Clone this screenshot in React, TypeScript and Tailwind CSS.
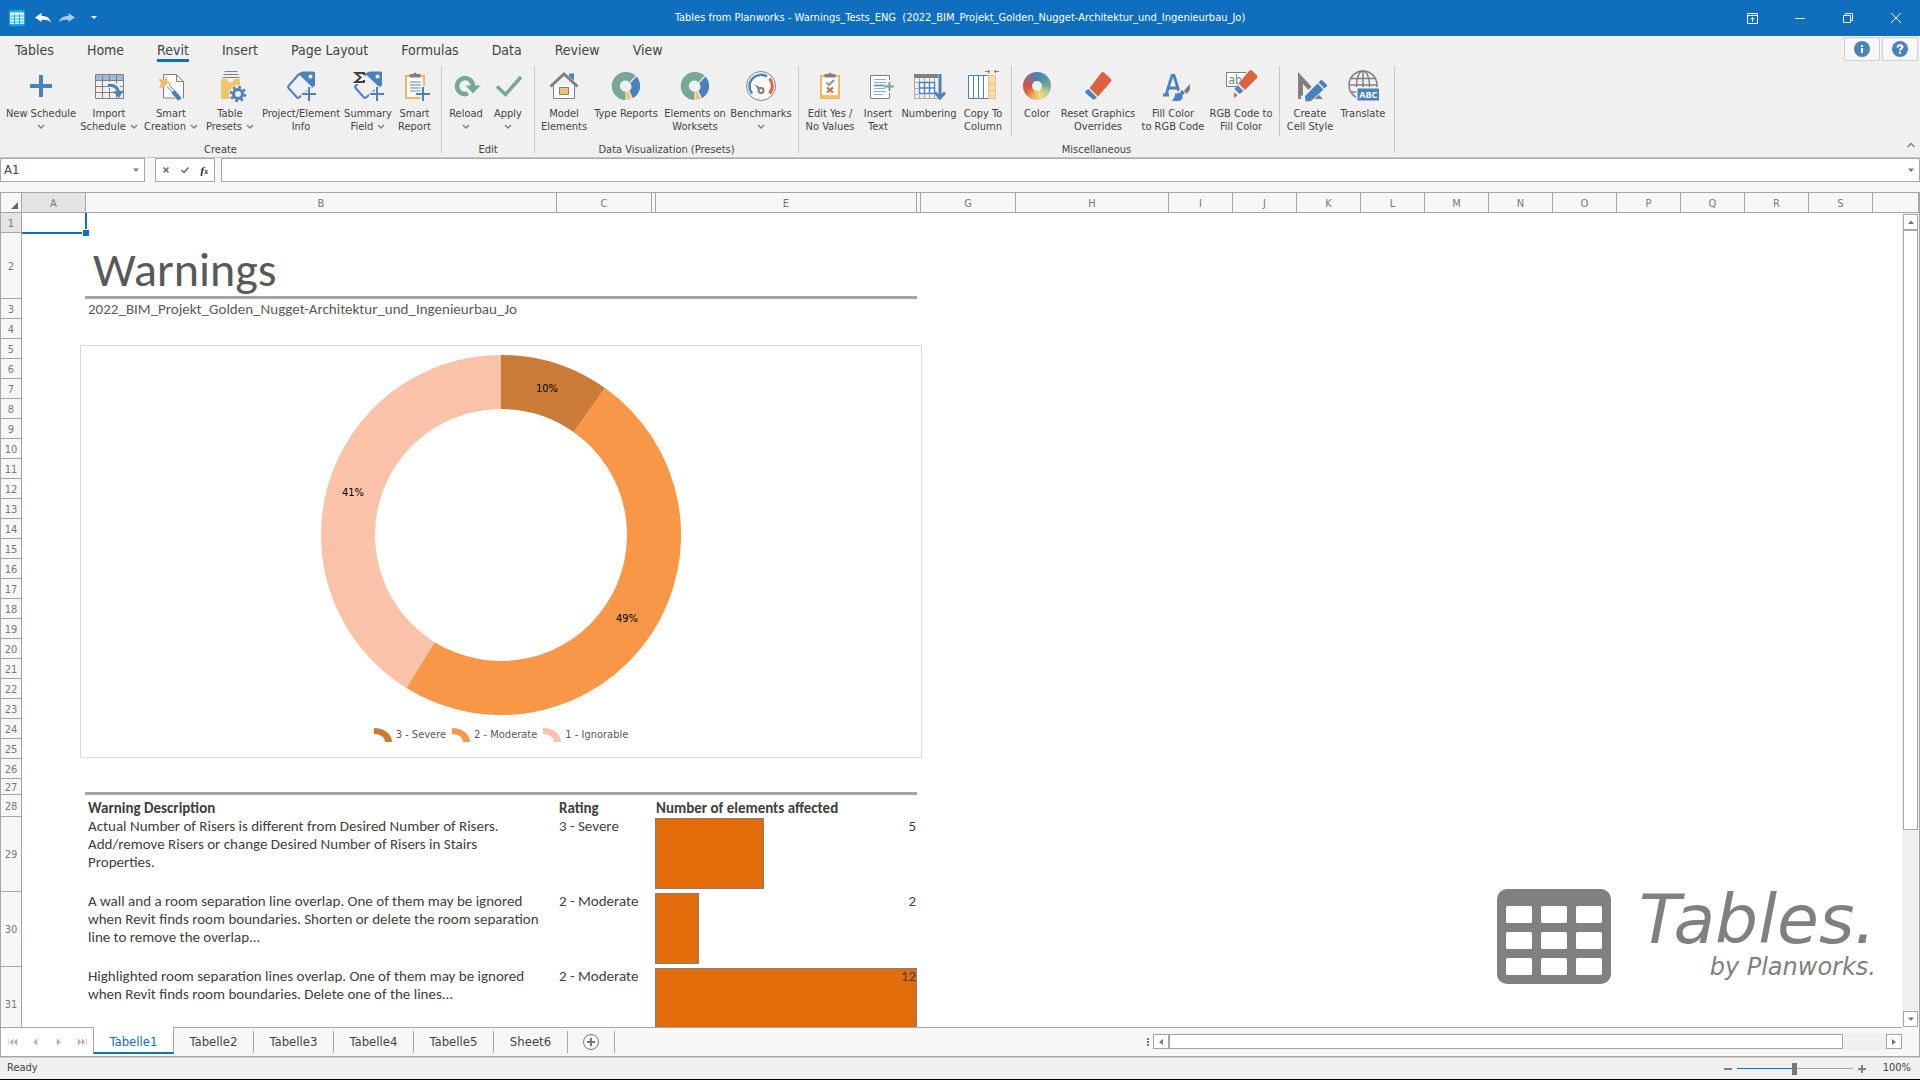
import { useState } from "react";
import type { ReactNode } from "react";

const BLUE = "#4b82bb";
const GREEN = "#77a897";
const ORANGE = "#f0c36d";
const RED = "#dc6342";
const GRAY = "#808080";
const BG = "#f0f0f0";

/* --------------------------------------------------------- */
/* RIBBON ICONS (32 x 32) */
/* --------------------------------------------------------- */
function Icon({ children }: { children: ReactNode }) {
  return (
    <svg viewBox="0 0 32 32" className="h-8 w-8 overflow-visible" fill="none" aria-hidden="true">
      {children}
    </svg>
  );
}

function SmallPlus({ x, y, color = BLUE }: { x: number; y: number; color?: string }) {
  return (
    <>
      <path d={`M${x - 8} ${y}H${x + 8}M${x} ${y - 8}V${y + 8}`} stroke={BG} strokeWidth="5" />
      <path d={`M${x - 7} ${y}H${x + 7}M${x} ${y - 7}V${y + 7}`} stroke={color} strokeWidth="2" />
    </>
  );
}

function Tag() {
  return (
    <>
      <path d="M14 4L3.500 16a1.500 1.500 0 0 0 0 2L12 27.500a1.500 1.500 0 0 0 2 0L29 15V3.500a1 1 0 0 0-1-1H18z" stroke={BLUE} strokeWidth="2" />
      <path d="M14 4.500L17 2h12a1 1 0 0 1 1 1v11l-3 3z" fill={BLUE} />
      <circle cx="25.500" cy="6.500" r="2" fill={BG} />
    </>
  );
}

const NewIcon = () => (
  <Icon>
    <path d="M16 5v22M5 16h22" stroke={BLUE} strokeWidth="4" />
  </Icon>
);

const ImportIcon = () => (
  <Icon>
    <rect x="3" y="5" width="28" height="5" fill="#9fb9d8" />
    <path d="M2.500 4.500h28v24h-28zM2.500 10.500h28M2.500 16.500h28M2.500 22.500h28M9.500 4.500v24M16.500 4.500v24M23.500 4.500v24" stroke={GRAY} />
    <path d="M15 15c7-1 11 3 11 9" stroke={BG} strokeWidth="6" />
    <path d="M15 15.500c7-1 10.500 3 10.500 8" stroke={BLUE} strokeWidth="3" />
    <path d="M20 21.500L26 28l4.500-7.500z" fill={BLUE} />
  </Icon>
);

const WandIcon = () => (
  <Icon>
    <path d="M8.500 4.500h13l7 7v16.500h-20zM21.500 4.500v7h7" stroke={GRAY} fill="#fbfbfb" />
    <path d="M3.500 8.500l5 1.500 3.500-3.500.5 5 4.500 2-4.500 2-.5 5-3.500-3.500-5 1.500 2.500-4.500z" fill="#f2bc68" />
    <path d="M11 15l15 15" stroke="#fbfbfb" strokeWidth="6" />
    <path d="M12 16.500l8 8" stroke={BLUE} strokeWidth="1" />
    <path d="M14 15l7 7" stroke={BLUE} strokeWidth="1" />
    <path d="M18 21.500l7 8" stroke={BLUE} strokeWidth="4.500" />
  </Icon>
);

const PresetsIcon = () => (
  <Icon>
    <path d="M10.500 1.500h13M9.500 4.500h15M8.500 7.500h17" stroke={GRAY} />
    <path d="M7 9h19v20H7z" fill={ORANGE} />
    <path d="M13 9h7a3.500 3.500 0 0 1-7 0z" fill={BG} />
    <circle cx="24" cy="24" r="9" fill={BG} />
    <circle cx="24" cy="24" r="4.500" stroke={BLUE} strokeWidth="3" />
    <circle cx="24" cy="24" r="7" stroke={BLUE} strokeWidth="2.500" strokeDasharray="2.750 2.750" />
  </Icon>
);

const ProjectIcon = () => (
  <Icon>
    <Tag />
    <SmallPlus x={24} y={24} />
  </Icon>
);

const SummaryIcon = () => (
  <Icon>
    <Tag />
    <path d="M1 1h12v13H1z" fill={BG} />
    <path d="M12 5V3H3.500l5 4.500-5 4.500H12v-2" stroke="#404040" strokeWidth="2" />
    <SmallPlus x={25} y={24} />
  </Icon>
);

function Clipboard({ children }: { children: ReactNode }) {
  return (
    <Icon>
      <path d="M7 6h18v22H7z" fill="#fff" stroke="#efb95b" strokeWidth="2" />
      <path d="M10.500 7.500V4h4a1.500 1.500 0 0 1 3 0h4v3.500z" fill={GRAY} />
      {children}
    </Icon>
  );
}

const ReportIcon = () => (
  <Clipboard>
    <path d="M11 12h11M11 15h11M11 18h11M11 21h11" stroke={BLUE} />
    <SmallPlus x={24} y={24} />
  </Clipboard>
);

const ReloadIcon = () => (
  <Icon>
    <path d="M23 16a8 8 0 1 0-5 7.500" stroke={GREEN} strokeWidth="4.500" />
    <path d="M15.500 15.500h15L23 23.500z" fill={GREEN} />
  </Icon>
);

const ApplyIcon = () => (
  <Icon>
    <path d="M5 16.500l8.500 8L29 7" stroke={GREEN} strokeWidth="3.500" />
  </Icon>
);

const HouseIcon = () => (
  <Icon>
    <path d="M21 3.500h5v7l-5-4z" fill={BLUE} />
    <path d="M5.500 15v13.500h21V15" stroke={GRAY} fill="#fbfbfb" />
    <path d="M2.500 16.500L16 4l13.500 12.500" stroke={GRAY} strokeWidth="3" />
    <path d="M11.500 17.500h9v7h-9z" fill={ORANGE} stroke={GRAY} />
  </Icon>
);

const RingIcon = () => (
  <Icon>
    <path d="M16 2a14 14 0 0 1 9.500 3.600l-6 6.800A5.500 5.500 0 1 0 15.500 21.500V30A14 14 0 0 1 16 2z" fill={GREEN} />
    <path d="M26.500 6.500a14 14 0 0 1-3.500 21.700l-3.500-7.200a5.500 5.500 0 0 0 .8-7.800z" fill={BLUE} />
    <path d="M21.700 28.800A14 14 0 0 1 16.500 30v-8.500l1.600-.3z" fill={ORANGE} />
  </Icon>
);

const GaugeIcon = () => (
  <Icon>
    <circle cx="16" cy="16" r="14.500" stroke={GRAY} fill="#f8f8f8" />
    <path d="M7 23.500a11.500 11.500 0 0 1 15-17" stroke={BLUE} strokeWidth="2.500" />
    <path d="M24.500 8.500a11.500 11.500 0 0 1 0 15" stroke={RED} strokeWidth="3" />
    <path d="M9.500 14l8 5-3 3z" fill={GRAY} />
    <circle cx="16" cy="20.500" r="2.500" stroke={GRAY} strokeWidth="2" fill="#f8f8f8" />
  </Icon>
);

const YesNoIcon = () => (
  <Clipboard>
    <path d="M8 25h16v3H8z" fill={ORANGE} />
    <path d="M12.500 12.500l2.500 2.500 5-5" stroke={GREEN} strokeWidth="2.200" />
    <path d="M13 17.500l6 5M19 17.500l-6 5" stroke={RED} strokeWidth="2.200" />
  </Clipboard>
);

const InsertTextIcon = () => (
  <Icon>
    <path d="M8.500 5.500h19v23h-19z" stroke={GRAY} fill="#fff" />
    <path d="M12 9.500h12M12 12.500h12M12 18.500h12M12 21.500h12M12 24.500h9" stroke="#8dacd0" />
    <path d="M12 15.500h12" stroke={GREEN} strokeWidth="2" />
    <path d="M28 10v13M22 16.500h11" stroke={BG} strokeWidth="4" />
    <path d="M27.500 12v9M22 16.500h10" stroke={GREEN} strokeWidth="2" />
  </Icon>
);

const NumberingIcon = () => (
  <Icon>
    <path d="M1 4h24v4H1z" fill={GRAY} />
    <path d="M1.500 8v20.500H25M6.500 8v4M11.500 8v4M16.500 8v4M21.500 8v4M1.500 12.500h4M1.500 18.500h4M1.500 24.500h4M6.500 25v4M11.500 25v4M16.500 25v4M21.500 25v4" stroke="#a8a8a8" />
    <path d="M6.500 12.500h15v11h-15zM6.500 18h15M11.500 12.500v11M16.500 12.500v11" stroke={BLUE} strokeWidth="1.500" fill="#fff" />
    <path d="M27 4v23M22 22.500l5 5.500 5-5.500" stroke={BLUE} strokeWidth="3" />
  </Icon>
);

const CopyColumnIcon = () => (
  <Icon>
    <path d="M1.500 5.500h20v23h-20zM6.500 5.500v23M11.500 5.500v23M16.500 5.500v23" stroke={BLUE} fill="#fff" />
    <path d="M21.500 5.500h7v23h-7zM21.500 13.500h7M21.500 20.500h7" stroke={ORANGE} fill="#f1dcb8" />
    <path d="M18 1.500h5M21 0l2 1.500L21 3M32 1.500h-5M29 0l-2 1.500L29 3" stroke={GRAY} />
  </Icon>
);

const ColorIcon = () => (
  <span className="flex h-8 w-8 items-center justify-center">
    <span className="flex h-7 w-7 items-center justify-center rounded-full bg-[conic-gradient(#4b82bb,#5b9aa0_15%,#77a897_25%,#b9cb8f_33%,#f3d98a_45%,#f2b160_55%,#dc6342_68%,#c9544a_76%,#8f6a80_88%,#4b82bb)]">
      <span className="h-2.5 w-2.5 rounded-full bg-[#f0f0f0]" />
    </span>
  </span>
);

const EraserIcon = () => (
  <Icon>
    <path d="M19.500 2.500a2 2 0 0 1 2.500 0l7 6.500a2 2 0 0 1 0 2.500L16 26.500 7.500 18z" fill={RED} />
    <path d="M6.500 19l8.500 8.500-2 1.500a2 2 0 0 1-2.500 0L3.500 23a2 2 0 0 1 0-2z" fill={BLUE} />
  </Icon>
);

const FillColorIcon = () => (
  <Icon>
    <path d="M6 25h6M18 25h5M9 25L15 5.500h2L23 25M12 18h8" stroke={BLUE} strokeWidth="2.800" />
    <path d="M22 26L34 14" stroke={BG} strokeWidth="8" />
    <path d="M14 30.500c4 0 3-8 8-7.500 5 .500 5 8-1 8-3 0-5 0-7-.500z" fill={BLUE} />
    <path d="M24 24l2.500-2.500" stroke={BLUE} strokeWidth="4" />
    <path d="M27 20.500l6-6.500v6l-3.500 4z" fill={GRAY} />
  </Icon>
);

const RgbIcon = () => (
  <Icon>
    <path d="M1.500 2.500h20v14h-20z" stroke={GRAY} fill="#fbfbfb" />
    <text x="3.500" y="13.500" fontSize="12" fill={GRAY} fontFamily="DejaVu Sans Condensed">ab</text>
    <path d="M13 24L27 5" stroke={BG} strokeWidth="12" />
    <path d="M24.500.600a2 2 0 0 1 2.500 0l5 5a2 2 0 0 1 0 2.500L20 20l-6.500-6.500z" fill={RED} />
    <path d="M12.500 15l6 6-4 3-5-5z" fill={BLUE} />
    <path d="M9 22l3.500 3.500L9 28z" fill={RED} />
  </Icon>
);

const StyleIcon = () => (
  <Icon>
    <path d="M4 2l25 27H4zM9 14v10h9z" fill={GRAY} fillRule="evenodd" />
    <path d="M10 31L33 10" stroke={BG} strokeWidth="11" />
    <path d="M27.500 9.500l6 6-3 3-6-6zM23.500 13.500l6 6L17 31l-5.500.500L11 26z" fill={BLUE} />
  </Icon>
);

const TranslateIcon = () => (
  <Icon>
    <circle cx="16" cy="15" r="14" stroke={GRAY} strokeWidth="1.500" />
    <ellipse cx="16" cy="15" rx="6.500" ry="14" stroke={GRAY} strokeWidth="1.500" />
    <path d="M16 1v28M2 15h28M4 8.500h24M4 22h24" stroke={GRAY} strokeWidth="1.500" />
    <path d="M9 17h26v15H9z" fill={BG} />
    <path d="M10.500 18.500H32v12H10.500z" fill={BLUE} />
    <text x="21.250" y="28" fontSize="9" fontWeight="bold" textAnchor="middle" fill="#fff" fontFamily="Noto Sans">ABC</text>
  </Icon>
);

/* --------------------------------------------------------- */
/* DATA */
/* --------------------------------------------------------- */
const MENU = ["Tables", "Home", "Revit", "Insert", "Page Layout", "Formulas", "Data", "Review", "View"];

type Command = { label: string[]; icon: () => ReactNode; width: string; arrow?: boolean; dividerAfter?: boolean };

const GROUPS: { name: string; width: string; commands: Command[] }[] = [
  {
    name: "Create",
    width: "w-[442px]",
    commands: [
      { label: ["New Schedule", ""], icon: NewIcon, width: "w-[82px]", arrow: true },
      { label: ["Import", "Schedule"], icon: ImportIcon, width: "w-[54px]", arrow: true },
      { label: ["Smart", "Creation"], icon: WandIcon, width: "w-[70px]", arrow: true },
      { label: ["Table", "Presets"], icon: PresetsIcon, width: "w-[48px]", arrow: true },
      { label: ["Project/Element", "Info"], icon: ProjectIcon, width: "w-[94px]" },
      { label: ["Summary", "Field"], icon: SummaryIcon, width: "w-[40px]", arrow: true },
      { label: ["Smart", "Report"], icon: ReportIcon, width: "w-[53px]" },
    ],
  },
  {
    name: "Edit",
    width: "w-[93px]",
    commands: [
      { label: ["Reload", ""], icon: ReloadIcon, width: "w-[48px]", arrow: true },
      { label: ["Apply", ""], icon: ApplyIcon, width: "w-[36px]", arrow: true },
    ],
  },
  {
    name: "Data Visualization (Presets)",
    width: "w-[264px]",
    commands: [
      { label: ["Model", "Elements"], icon: HouseIcon, width: "w-[58px]" },
      { label: ["Type Reports"], icon: RingIcon, width: "w-[66px]" },
      { label: ["Elements on", "Worksets"], icon: RingIcon, width: "w-[72px]" },
      { label: ["Benchmarks", ""], icon: GaugeIcon, width: "w-[60px]", arrow: true },
    ],
  },
  {
    name: "Miscellaneous",
    width: "w-[596px]",
    commands: [
      { label: ["Edit Yes /", "No Values"], icon: YesNoIcon, width: "w-[62px]" },
      { label: ["Insert", "Text"], icon: InsertTextIcon, width: "w-[34px]" },
      { label: ["Numbering"], icon: NumberingIcon, width: "w-[68px]" },
      { label: ["Copy To", "Column"], icon: CopyColumnIcon, width: "w-[40px]", dividerAfter: true },
      { label: ["Color"], icon: ColorIcon, width: "w-[48px]" },
      { label: ["Reset Graphics", "Overrides"], icon: EraserIcon, width: "w-[74px]" },
      { label: ["Fill Color", "to RGB Code"], icon: FillColorIcon, width: "w-[76px]" },
      { label: ["RGB Code to", "Fill Color"], icon: RgbIcon, width: "w-[60px]", dividerAfter: true },
      { label: ["Create", "Cell Style"], icon: StyleIcon, width: "w-[58px]" },
      { label: ["Translate"], icon: TranslateIcon, width: "w-[48px]" },
    ],
  },
];

const COLUMNS = [
  { name: "A", width: "w-[64px]" },
  { name: "B", width: "w-[471px]" },
  { name: "C", width: "w-[95px]" },
  { name: "", width: "w-[4px]" },
  { name: "E", width: "w-[261px]" },
  { name: "", width: "w-[4px]" },
  { name: "G", width: "w-[95px]" },
  { name: "H", width: "w-[153px]" },
  ...["I", "J", "K", "L", "M", "N", "O", "P", "Q", "R", "S"].map((name) => ({ name, width: "w-[64px]" })),
];

const SLICES = [
  { name: "3 - Severe", value: 5, color: "#cb7b38", label: "10%", x: 226, y: 37 },
  { name: "2 - Moderate", value: 25, color: "#f89747", label: "49%", x: 306, y: 267 },
  { name: "1 - Ignorable", value: 21, color: "#fac3a9", label: "41%", x: 32, y: 141 },
];

const WARNINGS = [
  {
    row: 29,
    lines: ["Actual Number of Risers is different from Desired Number of Risers.", "Add/remove Risers or change Desired Number of Risers in Stairs", "Properties."],
    rating: "3 - Severe",
    count: 5,
  },
  {
    row: 30,
    lines: ["A wall and a room separation line overlap. One of them may be ignored", "when Revit finds room boundaries. Shorten or delete the room separation", "line to remove the overlap..."],
    rating: "2 - Moderate",
    count: 2,
  },
  {
    row: 31,
    lines: ["Highlighted room separation lines overlap. One of them may be ignored", "when Revit finds room boundaries. Delete one of the lines..."],
    rating: "2 - Moderate",
    count: 12,
  },
];
const MAX_COUNT = 12;

const SHEETS = ["Tabelle1", "Tabelle2", "Tabelle3", "Tabelle4", "Tabelle5", "Sheet6"];

/* --------------------------------------------------------- */
/* PARTS */
/* --------------------------------------------------------- */
function Chevron({ up = false }: { up?: boolean }) {
  return (
    <svg viewBox="0 0 8 6" className="inline-block h-1.5 w-2" fill="none" aria-hidden="true">
      <path d={up ? "M.5 5L4 1.500 7.500 5" : "M1 1l3 3 3-3"} stroke="#808080" strokeWidth="1.500" />
    </svg>
  );
}

function Triangle({ dir }: { dir: "up" | "down" | "left" | "right" }) {
  const paths = { up: "M1 6h6L4 2.500z", down: "M1 2.500h6L4 6z", left: "M6 1v6L2 4z", right: "M2 1v6l4-3z" };
  return (
    <svg viewBox="0 0 8 8" className="h-2 w-2" aria-hidden="true">
      <path d={paths[dir]} fill="#777" />
    </svg>
  );
}

function TitleBar() {
  return (
    <header className="flex h-9 shrink-0 items-center bg-[#106ebe] text-white">
      <div className="flex flex-1 items-center">
        <svg viewBox="0 0 16 16" className="ml-[9px] h-4 w-4" aria-hidden="true">
          <rect width="16" height="16" rx="2" fill="#00b0f0" />
          <path d="M1 2.500h14V14H1z" fill="#fff" />
          <path d="M1 6h14M1 9h14M1 12h14M5.500 4v10M10.500 4v10" stroke="#00b0f0" />
        </svg>
        <button aria-label="Undo" className="ml-2.5">
          <svg viewBox="0 0 16 12" className="h-3 w-4" fill="#fff"><path d="M0 5.500L6.500 1v3C12 4 15 6 16 10.500c-2.500-2.500-5-3-9.500-2.500v2z" /></svg>
        </button>
        <button aria-label="Redo" className="ml-2">
          <svg viewBox="0 0 16 12" className="h-3 w-4" fill="#a9cbea"><path d="M16 5.500L9.500 1v3C4 4 1 6 0 10.500c2.500-2.500 5-3 9.500-2.500v2z" /></svg>
        </button>
        <button aria-label="Customize Quick Access Toolbar" className="ml-4">
          <svg viewBox="0 0 6 4" className="h-1 w-1.5" fill="#fff"><path d="M0 0h6L3 3z" /></svg>
        </button>
      </div>
      <h1 className="text-[11px] whitespace-pre">
        {"Tables from Planworks - Warnings_Tests_ENG  (2022_BIM_Projekt_Golden_Nugget-Architektur_und_Ingenieurbau_Jo)"}
      </h1>
      <div className="flex flex-1 justify-end">
        <button aria-label="Ribbon Display Options" className="flex h-9 w-12 items-center justify-center">
          <svg viewBox="0 0 11 11" className="h-[11px] w-[11px]" fill="none" stroke="#fff"><path d="M.5.5h10v10H.5zM.5 2.500h10M5.500 9V4.500M3.500 6.500l2-2 2 2" /></svg>
        </button>
        <button aria-label="Minimize" className="flex h-9 w-12 items-center justify-center">
          <svg viewBox="0 0 10 10" className="h-2.5 w-2.5" stroke="#fff"><path d="M0 5.500h10" /></svg>
        </button>
        <button aria-label="Restore" className="flex h-9 w-12 items-center justify-center">
          <svg viewBox="0 0 10 10" className="h-2.5 w-2.5" fill="none" stroke="#fff"><path d="M.5 2.500h7v7h-7zM2.500 2.500v-2h7v7h-2" /></svg>
        </button>
        <button aria-label="Close" className="flex h-9 w-12 items-center justify-center">
          <svg viewBox="0 0 10 10" className="h-2.5 w-2.5" stroke="#fff"><path d="M0 0l10 10M10 0L0 10" /></svg>
        </button>
      </div>
    </header>
  );
}

function Ribbon() {
  const [active, setActive] = useState("Revit");
  return (
    <section className="flex h-[122px] shrink-0 flex-col border-b border-[#c8c8c8] bg-[#f0f0f0]">
      <div className="flex justify-between pr-0.5">
        <nav className="flex gap-[33px] pl-[15px]">
          {MENU.map((name) => (
            <button
              key={name}
              onClick={() => setActive(name)}
              className={`h-[26px] border-b-[3px] pt-1 text-sm leading-5 ${active === name ? "border-[#106ebe]" : "border-transparent"}`}
            >
              {name}
            </button>
          ))}
        </nav>
        <div className="flex gap-0.5 pt-px">
          <button aria-label="Info" className="flex h-6 w-9 items-center justify-center rounded-xs border border-[#d0d0d0] bg-[#f7f7f7]">
            <svg viewBox="0 0 16 16" className="h-4 w-4"><circle cx="8" cy="8" r="8" fill={BLUE} /><path d="M7 4h2v2H7zM7 7h2v5H7z" fill="#fff" /></svg>
          </button>
          <button aria-label="Help" className="flex h-6 w-9 items-center justify-center rounded-xs border border-[#d0d0d0] bg-[#f7f7f7]">
            <svg viewBox="0 0 16 16" className="h-4 w-4"><circle cx="8" cy="8" r="8" fill={BLUE} /><path d="M5.500 6.500C5.500 3.500 10.500 3.500 10.500 6c0 1.700-2.500 1.500-2.500 3.500" fill="none" stroke="#fff" strokeWidth="2" /><path d="M7 10.800h2v2H7z" fill="#fff" /></svg>
          </button>
        </div>
      </div>
      <div className="flex flex-1 pt-1">
        {GROUPS.map((group) => (
          <div key={group.name} className={`flex h-[87px] flex-col border-r border-[#c8c8c8] ${group.width}`}>
            <div className="flex h-[77px] shrink-0">
              {group.commands.map(({ label, icon: CommandIcon, width, arrow, dividerAfter }) => (
                <div key={label.join(" ")} className={`flex shrink-0 ${dividerAfter ? "mr-px" : ""}`}>
                  <button className={`flex shrink-0 flex-col items-center pt-1 text-[11px] leading-[13px] ${width}`}>
                    <CommandIcon />
                    <span className="mt-[5px] whitespace-nowrap">{label[0]}</span>
                    {label.length > 1 && (
                      <span className="flex h-[13px] items-center gap-1 whitespace-nowrap">
                        {label[1]}
                        {arrow && <Chevron />}
                      </span>
                    )}
                  </button>
                  {dividerAfter && <span className="ml-2 h-[70px] w-px bg-[#c8c8c8]" />}
                </div>
              ))}
            </div>
            <div className="text-center text-[11px] leading-[13px]">{group.name}</div>
          </div>
        ))}
        <button aria-label="Collapse the Ribbon" className="mr-[3px] mb-[9px] ml-auto flex w-3 items-end justify-center">
          <Chevron up />
        </button>
      </div>
    </section>
  );
}

function FormulaBar() {
  return (
    <div className="flex h-[34px] shrink-0 items-start bg-[#f7f7f7]">
      <div className="flex h-6 w-[145px] items-center border border-[#a6a6a6] bg-white pr-1">
        <input aria-label="Name box" defaultValue="A1" className="w-full min-w-0 pl-[3px] text-[13px] outline-none" />
        <button aria-label="Open name list"><Triangle dir="down" /></button>
      </div>
      <div className="ml-2.5 flex h-6 w-[60px] items-center justify-around border border-[#a6a6a6] bg-white">
        <button aria-label="Cancel">
          <svg viewBox="0 0 8 8" className="h-2 w-2" stroke="#666" strokeWidth="1.500"><path d="M1.500 1.500l5 5M6.500 1.500l-5 5" /></svg>
        </button>
        <button aria-label="Enter">
          <svg viewBox="0 0 8 8" className="h-2 w-2" fill="none" stroke="#666" strokeWidth="1.500"><path d="M.5 4L3 6.500 7.500 1.500" /></svg>
        </button>
        <button aria-label="Insert function" className="flex items-center font-['Liberation_Serif',serif] text-[11px] leading-3 font-bold text-[#222] italic">
          f<span className="pt-1 text-[8px] leading-2">x</span>
        </button>
      </div>
      <div className="ml-1.5 flex h-6 flex-1 items-center border border-[#a6a6a6] bg-white pr-1">
        <input aria-label="Formula" className="w-full min-w-0 pl-1 text-[13px] outline-none" />
        <button aria-label="Expand formula bar"><Triangle dir="down" /></button>
      </div>
    </div>
  );
}

function ColumnHeaders() {
  return (
    <div className="flex h-[21px] shrink-0 border-y border-r-2 border-l border-[#a6a6a6] bg-[#f7f7f7] text-[11px] leading-[21px] text-[#777]">
      <div className="flex w-[21px] shrink-0 items-end justify-end border-r border-[#a6a6a6] pr-[3px] pb-[3px]">
        <svg viewBox="0 0 7 7" className="h-[7px] w-[7px]"><path d="M7 0v7H0z" fill="#666" /></svg>
      </div>
      {COLUMNS.map((col, i) => (
        <div key={i} className={`h-full shrink-0 border-r border-[#a6a6a6] text-center ${col.width} ${col.name === "A" ? "bg-[#e4e4e4]" : ""}`}>
          {col.name}
        </div>
      ))}
      <div className="flex-1" />
    </div>
  );
}

function point(r: number, share: number) {
  const a = share * 2 * Math.PI;
  return `${(180 + r * Math.sin(a)).toFixed(2)} ${(180 - r * Math.cos(a)).toFixed(2)}`;
}

function RatingChart() {
  const total = SLICES.reduce((sum, s) => sum + s.value, 0);
  let start = 0;
  return (
    <figure className="absolute top-[6px] -left-[5px] z-10 flex h-[413px] w-[842px] flex-col items-center border border-[#d9d9d9] bg-white pt-[9px] font-['DejaVu_Sans_Condensed','DejaVu_Sans',sans-serif]">
      <svg viewBox="0 0 360 360" className="h-[360px] w-[360px]" role="img" aria-label="Warnings by rating">
        {SLICES.map((s) => {
          const from = start / total;
          start += s.value;
          const to = start / total;
          const large = to - from > 0.5 ? 1 : 0;
          return (
            <path
              key={s.name}
              d={`M${point(180, from)}A180 180 0 ${large} 1 ${point(180, to)}L${point(126, to)}A126 126 0 ${large} 0 ${point(126, from)}Z`}
              fill={s.color}
            />
          );
        })}
        {SLICES.map((s) => (
          <text key={s.name} x={s.x} y={s.y} textAnchor="middle" className="fill-black text-[11px]">{s.label}</text>
        ))}
      </svg>
      <figcaption className="mt-3 flex gap-1.5 text-[11px] leading-4 text-[#595959]">
        {SLICES.map((s) => (
          <span key={s.name} className="flex items-center gap-1">
            <svg viewBox="0 0 18 14" className="h-3.5 w-[18px]" aria-hidden="true">
              <path d="M0 0c10 0 18 6 18 14h-7c0-5-5-8-11-8z" fill={s.color} />
            </svg>
            {s.name}
          </span>
        ))}
      </figcaption>
    </figure>
  );
}

function RowHeader({ n, height, selected = false }: { n: number; height: string; selected?: boolean }) {
  return (
    <th
      scope="row"
      className={`border-r border-b border-l border-[#a6a6a6] px-0 pt-0.5 pb-0 text-center align-middle text-[11px] leading-3 font-normal text-[#777] font-['DejaVu_Sans_Condensed','DejaVu_Sans',sans-serif] ${height} ${selected ? "bg-[#e4e4e4]" : "bg-[#f7f7f7]"}`}
    >
      {n}
    </th>
  );
}

function Sheet() {
  const plainRows = Array.from({ length: 21 }, (_, i) => i + 6);
  return (
    <table className="w-full table-fixed border-separate border-spacing-0 font-['Carlito','Lato',sans-serif] text-[15px] leading-[18px] text-[#404040]">
      <colgroup>
        <col className="w-[22px]" />
        <col className="w-[63px]" />
        <col className="w-[471px]" />
        <col className="w-[99px]" />
        <col className="w-[262px]" />
        <col />
      </colgroup>
      <tbody>
        <tr>
          <RowHeader n={1} height="h-5" selected />
          <td className="relative p-0">
            <div className="absolute top-0 left-0 h-[21px] w-[65px] border-r-2 border-b-2 border-[#106ebe]" />
            <div className="absolute top-4 left-[60px] h-2 w-2 border border-white bg-[#106ebe]" />
          </td>
          <td colSpan={4} />
        </tr>
        <tr>
          <RowHeader n={2} height="h-[66px]" />
          <td />
          <td colSpan={3} className="border-b-[3px] border-[#a5a5a5] py-0 pr-0 pl-2 align-bottom text-[48px] leading-[52px] text-[#595959]">
            <h2>Warnings</h2>
          </td>
          <td />
        </tr>
        <tr>
          <RowHeader n={3} height="h-5" />
          <td />
          <td colSpan={3} className="px-[3px] pt-0 pb-px align-bottom text-[#595959]">
            2022_BIM_Projekt_Golden_Nugget-Architektur_und_Ingenieurbau_Jo
          </td>
          <td />
        </tr>
        <tr>
          <RowHeader n={4} height="h-5" />
          <td colSpan={5} />
        </tr>
        <tr>
          <RowHeader n={5} height="h-5" />
          <td />
          <td className="relative p-0">
            <RatingChart />
          </td>
          <td colSpan={3} />
        </tr>
        {plainRows.map((n) => (
          <tr key={n}>
            <RowHeader n={n} height="h-5" />
            <td colSpan={5} />
          </tr>
        ))}
        <tr>
          <RowHeader n={27} height="h-4" />
          <td className="p-0" />
          <td colSpan={3} className="border-b-[3px] border-[#a5a5a5] p-0" />
          <td className="p-0" />
        </tr>
        <tr className="font-bold">
          <RowHeader n={28} height="h-[22px]" />
          <td />
          <td className="px-[3px] py-0 align-bottom">Warning Description</td>
          <td className="px-[3px] py-0 align-bottom">Rating</td>
          <td className="px-px py-0 align-bottom">Number of elements affected</td>
          <td />
        </tr>
        {WARNINGS.map((w) => (
          <tr key={w.row}>
            <RowHeader n={w.row} height="h-[75px]" />
            <td />
            <td className="px-[3px] py-0 align-top whitespace-nowrap">
              {w.lines.map((line) => (
                <div key={line}>{line}</div>
              ))}
            </td>
            <td className="px-[3px] py-0 align-top">{w.rating}</td>
            <td className="relative py-0 pr-px pl-0 text-right align-top">
              <div
                className="absolute top-px left-0 h-[71px] border border-[#7f7f7f] bg-[#e36c0a]"
                style={{ width: `${(w.count / MAX_COUNT) * 100}%` }}
              />
              <span className="relative">{w.count}</span>
            </td>
            <td />
          </tr>
        ))}
      </tbody>
    </table>
  );
}

function Watermark() {
  return (
    <div className="absolute right-[26px] bottom-[43px] flex items-start text-[#808080]">
      <svg viewBox="0 0 114 95" className="h-[95px] w-[114px]" aria-hidden="true">
        <rect width="114" height="95" rx="10" fill="#808080" />
        {[17, 43, 69].map((y) => [9, 44, 79].map((x) => <rect key={`${x}-${y}`} x={x} y={y} width="26" height="17" rx="1.500" fill="#fff" />))}
      </svg>
      <div className="w-[265px] text-right font-['DejaVu_Sans',sans-serif] whitespace-nowrap italic">
        <div className="text-[68px] leading-[62px]">Tables.</div>
        <div className="text-2xl leading-8">by Planworks.</div>
      </div>
    </div>
  );
}

function VerticalScrollbar() {
  return (
    <div className="flex w-[18px] shrink-0 flex-col border-r border-[#a6a6a6] bg-[#f0f0f0] px-px pt-px">
      <button aria-label="Scroll up" className="flex h-4 shrink-0 items-center justify-center border border-[#a6a6a6] bg-white"><Triangle dir="up" /></button>
      <div className="h-[600px] border border-[#a6a6a6] bg-white" />
      <button aria-label="Scroll down" className="mt-auto flex h-4 shrink-0 items-center justify-center border border-[#a6a6a6] bg-white"><Triangle dir="down" /></button>
    </div>
  );
}

function SheetTabs() {
  const [active, setActive] = useState("Tabelle1");
  const nav = [
    { label: "First sheet", d: "M.5 1v6M5 1v6L2 4zM9 1v6L6 4z" },
    { label: "Previous sheet", d: "M6 1v6L2.500 4z" },
    { label: "Next sheet", d: "M3 1v6l3.500-3z" },
    { label: "Last sheet", d: "M9.500 1v6M1 1v6l3-3zM5 1v6l3-3z" },
  ];
  return (
    <div className="flex h-[30px] shrink-0 border-r border-b border-l border-[#a6a6a6] bg-[#f7f7f7]">
      <div className="flex w-[92px] items-center justify-around border-t border-[#a6a6a6] bg-white pb-px">
        {nav.map((n) => (
          <button key={n.label} aria-label={n.label}>
            <svg viewBox="0 0 10 8" className="h-2 w-2.5" fill="#b0b0b0" stroke="#b0b0b0" strokeWidth=".5"><path d={n.d} /></svg>
          </button>
        ))}
      </div>
      {SHEETS.map((name) =>
        name === active ? (
          <button key={name} className="mb-0.5 w-[81px] border-x border-b-2 border-x-[#a6a6a6] border-b-[#106ebe] bg-white pt-1 text-[13px] text-[#106ebe]">
            {name}
          </button>
        ) : (
          <div key={name} className="flex border-t border-[#a6a6a6] pt-[3px] pb-[3px]">
            <button onClick={() => setActive(name)} className={`border-r border-[#a6a6a6] text-[13px] ${name === "Sheet6" ? "w-[74px]" : "w-[80px]"}`}>
              {name}
            </button>
          </div>
        ),
      )}
      <div className="flex flex-1 border-t border-[#a6a6a6] py-[3px]">
        <button aria-label="New sheet" className="flex w-[47px] items-center justify-center border-r border-[#a6a6a6]">
          <svg viewBox="0 0 16 16" className="h-4 w-4" fill="none" stroke="#777"><circle cx="8" cy="8" r="7.500" /><path d="M8 4v8M4 8h8" strokeWidth="2" /></svg>
        </button>
      </div>
      <div className="flex w-[755px] items-center border-t border-[#a6a6a6] pb-px">
        <svg viewBox="0 0 2 8" className="mr-1 h-2 w-0.5" fill="#777"><path d="M0 0h2v2H0zM0 3h2v2H0zM0 6h2v2H0z" /></svg>
        <div className="flex h-[17px] flex-1 items-center bg-[#f0f0f0]">
          <button aria-label="Scroll left" className="flex h-[15px] w-4 items-center justify-center border border-[#a6a6a6] bg-white"><Triangle dir="left" /></button>
          <div className="h-[15px] w-[674px] border border-[#a6a6a6] bg-white" />
          <button aria-label="Scroll right" className="ml-auto flex h-[15px] w-4 items-center justify-center border border-[#a6a6a6] bg-white"><Triangle dir="right" /></button>
        </div>
      </div>
      <div className="w-[17px]" />
    </div>
  );
}

function StatusBar() {
  return (
    <footer className="flex h-[23px] shrink-0 items-center border-t border-b border-t-[#d0d0d0] border-b-black bg-[#f0f0f0] pr-[9px] pl-[7px] text-[11px]">
      <span>Ready</span>
      <button aria-label="Zoom out" className="ml-auto">
        <svg viewBox="0 0 8 8" className="h-2 w-2" stroke="#808080" strokeWidth="2"><path d="M0 4h8" /></svg>
      </button>
      <input
        type="range"
        aria-label="Zoom"
        defaultValue={50}
        className="mx-[5px] h-3 w-[116px] appearance-none bg-[linear-gradient(to_right,#106ebe_50%,#a6a6a6_50%)] bg-[length:100%_1px] bg-center bg-no-repeat [&::-webkit-slider-thumb]:h-3 [&::-webkit-slider-thumb]:w-[5px] [&::-webkit-slider-thumb]:appearance-none [&::-webkit-slider-thumb]:bg-[#777]"
      />
      <button aria-label="Zoom in">
        <svg viewBox="0 0 8 8" className="h-2 w-2" stroke="#808080" strokeWidth="2"><path d="M0 4h8M4 0v8" /></svg>
      </button>
      <span className="ml-[17px]">100%</span>
    </footer>
  );
}

export default function App() {
  return (
    <div className="flex h-screen flex-col overflow-hidden bg-white font-['DejaVu_Sans_Condensed','DejaVu_Sans',sans-serif] text-[#444]">
      <TitleBar />
      <Ribbon />
      <FormulaBar />
      <ColumnHeaders />
      <main className="flex min-h-0 flex-1">
        <div className="relative min-w-0 flex-1 overflow-hidden">
          <Sheet />
          <Watermark />
        </div>
        <VerticalScrollbar />
      </main>
      <SheetTabs />
      <StatusBar />
    </div>
  );
}
